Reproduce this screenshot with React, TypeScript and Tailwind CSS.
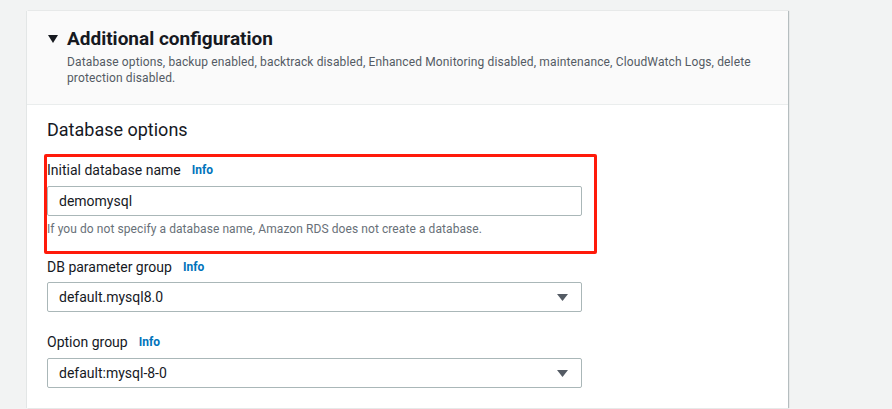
import React from "react";

const font = { fontFamily: "Roboto, 'Noto Sans', sans-serif" };

function Info() {
  return <span className="ml-[11px] text-[12px] font-bold text-[#0073bb]">Info</span>;
}

function Caret() {
  return (
    <svg width="11" height="7" viewBox="0 0 11 7" className="shrink-0">
      <polygon points="0,0 11,0 5.5,7" fill="#545b64" />
    </svg>
  );
}

function Select({ value }: { value: string }) {
  return (
    <div className="flex h-[30px] w-[535px] items-center justify-between rounded-[2px] border border-[#aab7b8] bg-white pl-[11px] pr-[13px]">
      <span className="text-[14px] text-[#16191f]">{value}</span>
      <Caret />
    </div>
  );
}

export default function App() {
  return (
    <div className="min-h-[409px] w-[892px] bg-[#f2f3f3] pl-[27px] pt-[11px]" style={font}>
      <div className="w-[761px] bg-white shadow-[1px_0_1px_rgba(0,28,36,0.25),-1px_0_0_rgba(0,28,36,0.06)]">
        <div className="border-b border-[#eaeded] bg-[#fafafa] pb-[18px] pl-[21px] pr-[20px] pt-[16px]">
          <div className="flex items-center">
            <svg width="10" height="8" viewBox="0 0 10 8" className="mr-[9px]">
              <polygon points="0,0 10,0 5,8" fill="#16191f" />
            </svg>
            <h2 className="text-[19px] font-bold leading-[24px] text-[#16191f]">Additional configuration</h2>
          </div>
          <p className="mt-[3px] pl-[19px] text-[12px] leading-[16px] tracking-[0.13px] text-[#545b64]">
            Database options, backup enabled, backtrack disabled, Enhanced Monitoring disabled, maintenance, CloudWatch Logs, delete protection disabled.
          </p>
        </div>
        <div className="pb-[20px] pl-[20px] pt-[13px]">
          <h3 className="text-[18px] leading-[24px] text-[#16191f]">Database options</h3>
          <div className="-ml-[3px] mt-[12px] w-[553px] rounded-[2px] border-[3px] border-[#ff1a0a] pb-[14px] pt-[3px]">
            <div className="flex items-center text-[14px] leading-[20px] text-[#16191f]">
              Initial database name
              <Info />
            </div>
            <div className="mt-[6px] flex h-[30px] w-[535px] items-center rounded-[2px] border border-[#aab7b8] bg-white pl-[11px] text-[14px] text-[#16191f]">
              demomysql
            </div>
            <p className="mt-[5px] text-[12px] leading-[16px] tracking-[0.08px] text-[#687078]">
              If you do not specify a database name, Amazon RDS does not create a database.
            </p>
          </div>
          <div className="mt-[3px] flex items-center text-[14px] leading-[20px] text-[#16191f]">
            DB parameter group
            <Info />
          </div>
          <div className="mt-[5px]">
            <Select value="default.mysql8.0" />
          </div>
          <div className="mt-[20px] flex items-center text-[14px] leading-[20px] text-[#16191f]">
            Option group
            <Info />
          </div>
          <div className="mt-[6px]">
            <Select value="default:mysql-8-0" />
          </div>
        </div>
      </div>
    </div>
  );
}
